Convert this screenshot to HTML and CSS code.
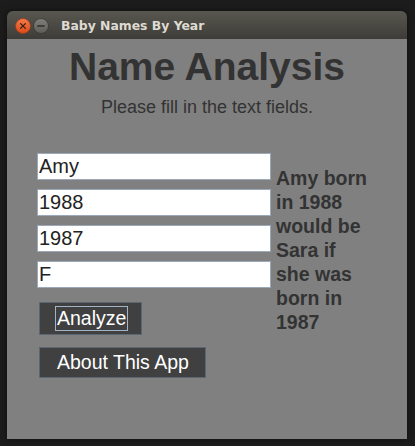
FILE: index.html
```html
<!DOCTYPE html>
<html>
<head>
<meta charset="utf-8">
<link rel="stylesheet" href="styles.css">
</head>
<body>
<div class="window">
  <div class="titlebar">
    <div class="controls">
      <svg class="ctl" width="16" height="16" viewBox="0 0 16 16">
        <defs>
          <linearGradient id="gc" x1="0" y1="0" x2="0" y2="1">
            <stop offset="0" stop-color="#f47b4a"/>
            <stop offset="1" stop-color="#dc4a17"/>
          </linearGradient>
        </defs>
        <circle cx="8" cy="8" r="7.5" fill="url(#gc)" stroke="#9c3c1c" stroke-width="0.8"/>
        <path d="M5.6 5.6 L10.4 10.4 M10.4 5.6 L5.6 10.4" stroke="#3b2116" stroke-width="1.3" stroke-linecap="round"/>
      </svg>
      <svg class="ctl" width="16" height="16" viewBox="0 0 16 16">
        <defs>
          <linearGradient id="gm" x1="0" y1="0" x2="0" y2="1">
            <stop offset="0" stop-color="#807f79"/>
            <stop offset="1" stop-color="#5d5c57"/>
          </linearGradient>
        </defs>
        <circle cx="8" cy="8" r="7.5" fill="url(#gm)" stroke="#3a3935" stroke-width="0.8"/>
        <path d="M4.8 8 L11.2 8" stroke="#2f2e2b" stroke-width="1.4" stroke-linecap="round"/>
      </svg>
    </div>
    <span class="title">Baby Names By Year</span>
  </div>
  <div class="content">
    <h1 class="heading">Name Analysis</h1>
    <p class="subtitle">Please fill in the text fields.</p>
    <div class="form-row">
      <div class="form-col">
        <input class="field" type="text" value="Amy" readonly>
        <input class="field" type="text" value="1988" readonly>
        <input class="field" type="text" value="1987" readonly>
        <input class="field" type="text" value="F" readonly>
        <button class="btn btn-analyze"><span class="focus">Analyze</span></button>
        <button class="btn btn-about">About This App</button>
      </div>
      <p class="result">Amy born in 1988 would be Sara if she was born in 1987</p>
    </div>
  </div>
</div>
</body>
</html>
```

FILE: styles.css
```css
html, body {
  margin: 0;
  padding: 0;
}
body {
  background: #1c1c1c;
  width: 415px;
  height: 446px;
  overflow: hidden;
}
.window {
  margin: 11px 0 0 7px;
  width: 400px;
  height: 428px;
  display: flex;
  flex-direction: column;
  box-shadow: 0 0 6px rgba(0,0,0,0.5);
  border-radius: 6px 6px 0 0;
}
.titlebar {
  height: 28px;
  flex: none;
  display: flex;
  align-items: center;
  background: linear-gradient(#58574f, #3d3c38);
  border-radius: 6px 6px 0 0;
}
.controls {
  display: flex;
  gap: 2px;
  margin-left: 8px;
  margin-top: 1px;
}
.ctl {
  display: block;
}
.title {
  margin-left: 12px;
  font-family: "DejaVu Sans", sans-serif;
  font-weight: bold;
  font-size: 12.4px;
  color: #dfdbd2;
  line-height: 28px;
  padding-top: 1px;
}
.content {
  flex: 1;
  background: #808080;
  display: flex;
  flex-direction: column;
  font-family: "Liberation Sans", Arial, sans-serif;
  color: #333333;
}
.heading {
  margin: 0;
  padding-top: 5px;
  font-size: 39px;
  line-height: 45px;
  font-weight: bold;
  text-align: center;
  color: #333333;
}
.subtitle {
  margin: 7px 0 0;
  font-size: 18px;
  line-height: 22px;
  text-align: center;
  color: #333333;
}
.form-row {
  display: flex;
  align-items: flex-start;
  margin-top: 35px;
  padding-left: 30px;
}
.form-col {
  display: flex;
  flex-direction: column;
  align-items: flex-start;
  width: 234px;
}
.field {
  box-sizing: border-box;
  width: 234px;
  height: 27px;
  margin: 0 0 9px;
  padding: 0 1px;
  border: 1px solid #9aa8b8;
  background: #ffffff;
  font-family: "Liberation Sans", Arial, sans-serif;
  font-size: 20px;
  line-height: 25px;
  color: #222222;
  outline: none;
}
.field:last-of-type {
  margin-bottom: 0;
}
.btn {
  font-family: "Liberation Sans", Arial, sans-serif;
  font-size: 19.5px;
  line-height: 23px;
  color: #ffffff;
  background: #404040;
  border: 1px solid #5a6671;
  padding: 3px 16px 3px 17px;
  margin: 0 0 0 2px;
  border-radius: 0;
  cursor: default;
}
.btn-analyze {
  margin-top: 14px;
  padding: 3px 13px 3px 15px;
}
.btn-about {
  margin-top: 12px;
}
.focus {
  display: block;
  border: 1px solid #a2b4c8;
  padding: 0 1px;
}
.result {
  margin: 13px 0 0 5px;
  width: 95px;
  font-size: 19.5px;
  line-height: 24px;
  font-weight: bold;
  color: #333333;
}
```
